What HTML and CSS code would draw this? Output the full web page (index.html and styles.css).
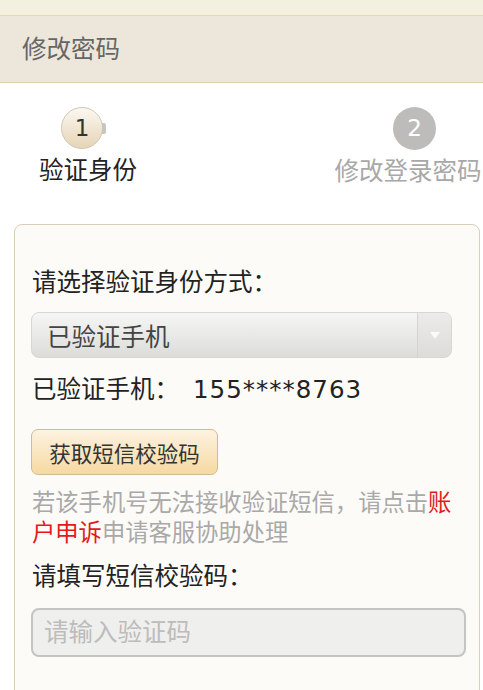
FILE: index.html
```html
<!DOCTYPE html>
<html lang="zh-CN">
<head>
<meta charset="utf-8">
<title>修改密码</title>
<link rel="stylesheet" href="styles.css">
</head>
<body>
<div class="topbar"></div>
<div class="header">修改密码</div>
<div class="steps">
  <div class="step step-active">
    <div class="circle circle-active">1<span class="tab"></span></div>
    <div class="step-label">验证身份</div>
  </div>
  <div class="step step-next">
    <div class="circle circle-next">2</div>
    <div class="step-label">修改登录密码</div>
  </div>
</div>
<div class="card">
  <div class="label">请选择验证身份方式：</div>
  <div class="select">
    <span class="select-text">已验证手机</span>
    <span class="select-arrow"><span class="tri"></span></span>
  </div>
  <div class="phone">已验证手机：<span class="num">155****8763</span></div>
  <button class="btn">获取短信校验码</button>
  <p class="help">若该手机号无法接收验证短信，请点击<span class="red">账户申诉</span>申请客服协助处理</p>
  <div class="label label2">请填写短信校验码：</div>
  <div class="input">请输入验证码</div>
</div>
</body>
</html>
```
FILE: styles.css
```css
* { box-sizing: border-box; }
html, body { margin: 0; padding: 0; background: #ffffff; }
body {
  font-family: "DejaVu Sans", "Noto Sans CJK SC", sans-serif;
  color: #222;
  width: 483px;
  overflow: hidden;
}
.topbar {
  height: 16px;
  background: #f4f0e0;
  border-bottom: 1px solid #e2d8b6;
}
.header {
  height: 67px;
  background: #ede7db;
  border-bottom: 1px solid #dcd1b0;
  padding-left: 22px;
  font-size: 24.5px;
  line-height: 68px;
  color: #666;
}
.steps {
  display: flex;
  padding-top: 24px;
  height: 141px;
}
.step {
  display: flex;
  flex-direction: column;
  align-items: center;
}
.step-active { margin-left: 38px; width: 100px; }
.step-next { margin-left: auto; width: 150px; margin-right: 0; }
.circle {
  width: 42px;
  height: 42px;
  border-radius: 50%;
  font-size: 23px;
  line-height: 41px;
  text-align: center;
  position: relative;
}
.circle-active {
  margin-left: -12px;
  background: linear-gradient(#fbf8f2, #e6d4b5);
  border: 1px solid #d0c7b8;
  color: #333;
}
.circle-next {
  margin-left: 13px;
  width: 43px;
  height: 43px;
  line-height: 43px;
  background: #bdbcba;
  color: #fff;
}
.tab {
  position: absolute;
  right: -4px;
  top: 15px;
  width: 4px;
  height: 11px;
  background: #c9c6c0;
  border-radius: 0 2px 2px 0;
}
.step-label {
  margin-top: 7px;
  font-size: 24.5px;
  line-height: 30px;
  white-space: nowrap;
}
.step-active .step-label { color: #222; }
.step-next .step-label { color: #a8a8a8; }
.card {
  margin: 0 3px 0 14px;
  background: #fdfbf7;
  border: 1px solid #dacfbd;
  border-radius: 8px 8px 0 0;
  padding: 43px 14px 40px 17px;
}
.label {
  font-size: 24.5px;
  line-height: 30px;
  color: #222;
}
.select {
  margin: 14px 0 0 -1px;
  width: 421px;
  height: 46px;
  border-radius: 8px;
  background: linear-gradient(#f6f6f4, #dcdcda);
  border: 1px solid #d6d6d4;
  display: flex;
  align-items: center;
  overflow: hidden;
}
.select-text {
  flex: 1;
  padding-left: 15px;
  font-size: 24.5px;
  color: #444;
}
.select-arrow {
  width: 34px;
  height: 100%;
  border-left: 1px solid #d4d4d2;
  background: linear-gradient(#ecebe9, #dddcda);
  display: flex;
  align-items: center;
  justify-content: center;
}
.tri {
  width: 0;
  height: 0;
  border-left: 5px solid transparent;
  border-right: 5px solid transparent;
  border-top: 7px solid #fafafa;
}
.phone {
  margin-top: 17px;
  font-size: 24.5px;
  line-height: 30px;
  color: #222;
}
.num {
  margin-left: 14px;
  letter-spacing: 1px;
}
.btn {
  display: block;
  margin: 24px 0 0 -1px;
  width: 187px;
  height: 46px;
  border: 1px solid #d3bb90;
  border-radius: 7px;
  background: linear-gradient(#fdf3e0, #f6d9a2);
  font-family: "Noto Sans CJK SC", sans-serif;
  font-size: 21.5px;
  color: #333;
  padding: 0;
}
.help {
  margin: 13px 0 0 0;
  font-size: 23.3px;
  line-height: 30px;
  color: #a9a9a9;
}
.red { color: #e21a1a; }
.label2 { margin-top: 14px; }
.input {
  margin: 16px 0 0 -1px;
  width: 435px;
  height: 49px;
  border: 2px solid #c4c4c2;
  border-radius: 8px;
  background: #efefee;
  font-size: 24.5px;
  line-height: 45px;
  padding-left: 11px;
  color: #bcbcbc;
}
```
